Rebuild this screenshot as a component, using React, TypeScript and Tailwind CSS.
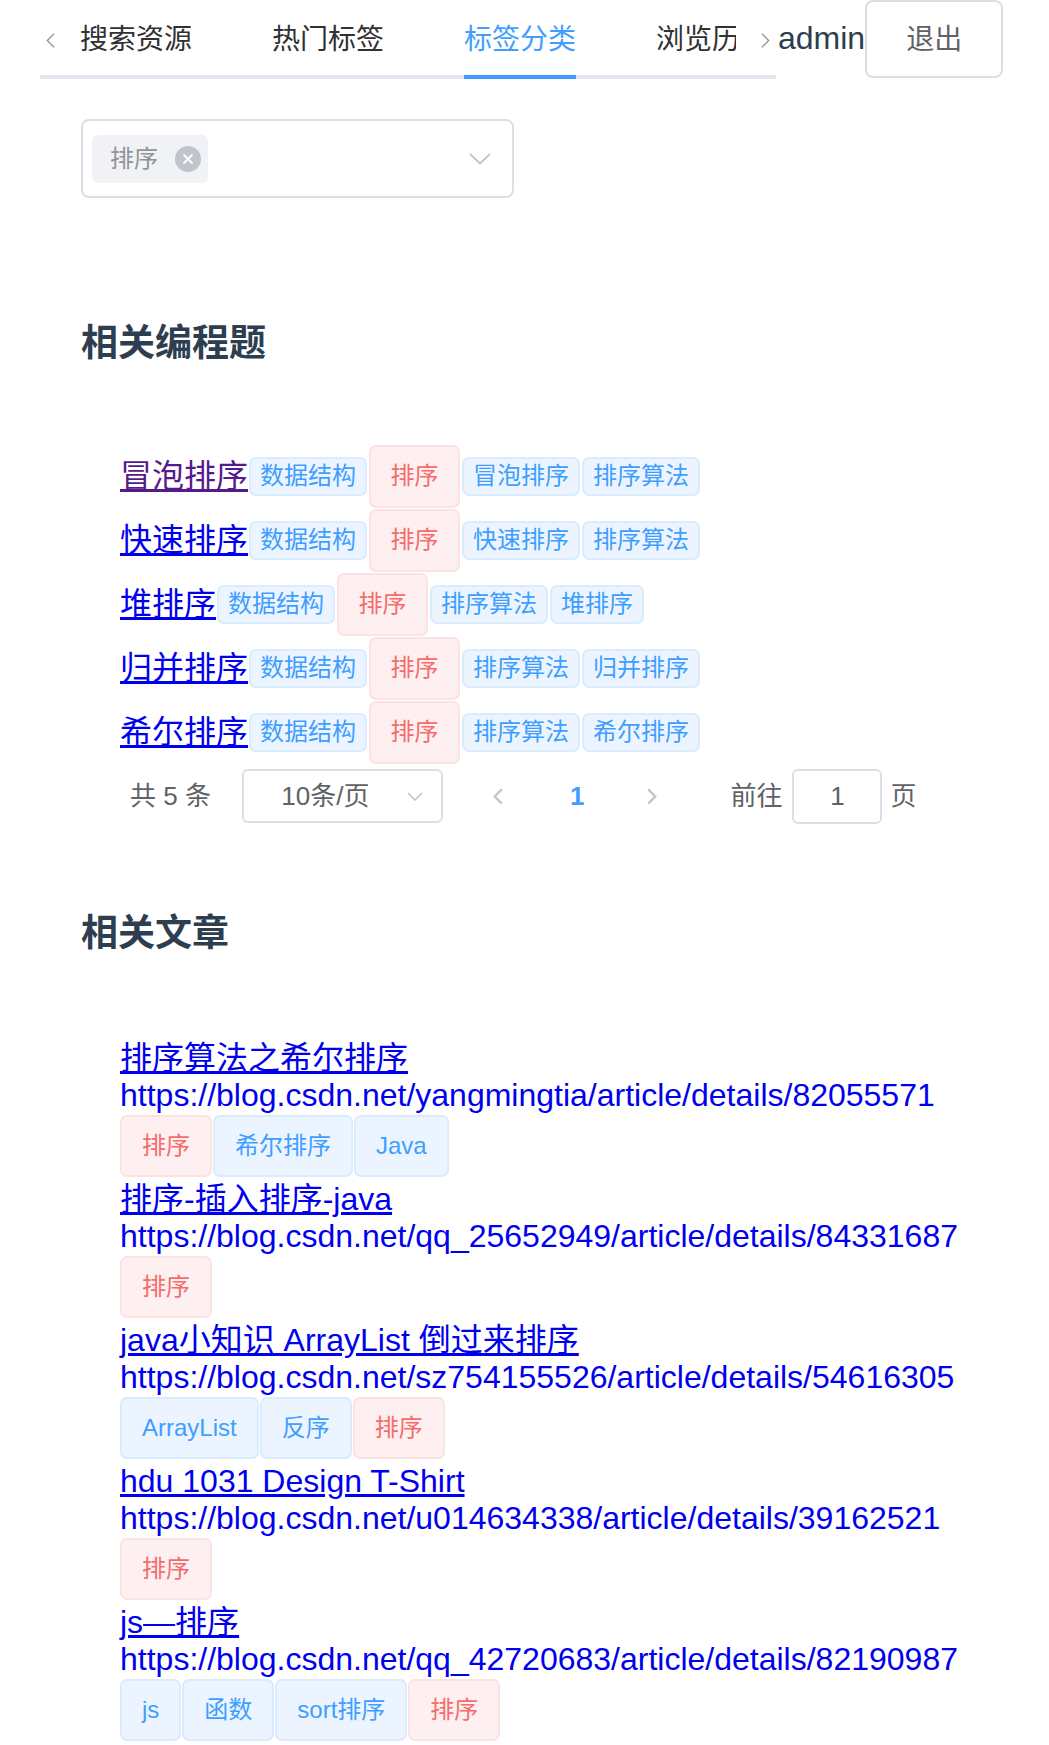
import React from 'react';

const problems = [
  { name: '冒泡排序', visited: true, tags: ['数据结构', '排序', '冒泡排序', '排序算法'] },
  { name: '快速排序', visited: false, tags: ['数据结构', '排序', '快速排序', '排序算法'] },
  { name: '堆排序', visited: false, tags: ['数据结构', '排序', '排序算法', '堆排序'] },
  { name: '归并排序', visited: false, tags: ['数据结构', '排序', '排序算法', '归并排序'] },
  { name: '希尔排序', visited: false, tags: ['数据结构', '排序', '排序算法', '希尔排序'] },
];

const articles = [
  { title: '排序算法之希尔排序', url: 'https://blog.csdn.net/yangmingtia/article/details/82055571', tags: ['排序', '希尔排序', 'Java'] },
  { title: '排序-插入排序-java', url: 'https://blog.csdn.net/qq_25652949/article/details/84331687', tags: ['排序'] },
  { title: 'java小知识 ArrayList 倒过来排序', url: 'https://blog.csdn.net/sz754155526/article/details/54616305', tags: ['ArrayList', '反序', '排序'] },
  { title: 'hdu 1031 Design T-Shirt', url: 'https://blog.csdn.net/u014634338/article/details/39162521', tags: ['排序'] },
  { title: 'js—排序', url: 'https://blog.csdn.net/qq_42720683/article/details/82190987', tags: ['js', '函数', 'sort排序', '排序'] },
];

const tabs = ['搜索资源', '热门标签', '标签分类', '浏览历史'];

function Chevron({ dir, className }: { dir: 'left' | 'right'; className: string }) {
  return (
    <svg viewBox="0 0 12 18" className={className} fill="none" stroke="currentColor">
      {dir === 'left' ? <path d="M10 1.5 L2.5 9 L10 16.5" /> : <path d="M2 1.5 L9.5 9 L2 16.5" />}
    </svg>
  );
}

// big tag = element default size, small = mini
function Tag({ text, big, gap }: { text: string; big?: boolean; gap: string }) {
  const red = text === '排序';
  const size = big ? 'h-[62px] px-[20px]' : red ? 'h-[63px] px-[19.5px]' : 'h-[39px] px-[9px]';
  const color = red
    ? 'bg-[#fef0f0] border-[#fde2e2] text-[#f56c6c]'
    : 'bg-[#ecf5ff] border-[#d9ecff] text-[#409eff]';
  return (
    <span className={`${gap} ${size} ${color} flex items-center border-2 rounded-[7px] text-[24px] leading-none whitespace-nowrap`}>
      {text}
    </span>
  );
}

export default function App() {
  return (
    <div className="w-[1049px] min-h-[1745px] bg-white font-['Liberation_Sans','Noto_Sans_CJK_SC',sans-serif] text-[#2c3e50]">
      {/* header */}
      <div className="flex items-start h-[79px]">
        <div className="relative ml-[40px] w-[736px] h-[79px] flex">
          <div className="absolute left-0 right-0 bottom-0 h-[4px] bg-[#e4e7ed]" />
          <div className="w-[40px] h-[75px] flex items-center pl-[5px] pt-[6px] text-[#909399]">
            <Chevron dir="left" className="w-[11px] h-[17px] stroke-[1.5]" />
          </div>
          <div className="relative w-[656px] h-[79px] overflow-hidden flex">
            {tabs.map((t, i) => (
              <div
                key={t}
                className={`relative h-[79px] shrink-0 flex items-start pt-[21px] text-[28px] leading-[37px] whitespace-nowrap ${i === 0 ? 'pr-[40px]' : i === 3 ? 'pl-[40px]' : 'px-[40px]'} ${i === 2 ? 'text-[#409eff]' : 'text-[#303133]'}`}
              >
                {t}
                {i === 2 && <div className="absolute left-[40px] right-[40px] bottom-0 h-[4px] bg-[#409eff]" />}
              </div>
            ))}
          </div>
          <div className="w-[40px] h-[75px] flex items-center justify-end pr-[5px] pt-[6px] text-[#909399]">
            <Chevron dir="right" className="w-[11px] h-[17px] stroke-[1.5]" />
          </div>
        </div>
        <div className="ml-[2px] mt-[20px] text-[32px] leading-[37px] text-[#2c3e50]">admin</div>
        <button className="w-[138px] h-[78px] border-2 border-[#dcdfe6] rounded-[8px] bg-white flex items-center justify-center pt-[2px] text-[28px] text-[#606266]">
          退出
        </button>
      </div>

      {/* select */}
      <div className="ml-[81px] mt-[40px] w-[433px] h-[79px] border-2 border-[#dcdfe6] rounded-[8px] flex items-center pr-[21px]">
        <div className="ml-[9px] h-[48px] bg-[#f0f2f5] rounded-[6px] flex items-center pl-[18px] pr-[7px]">
          <span className="text-[24px] leading-none text-[#909399]">排序</span>
          <span className="ml-[17px] w-[26px] h-[26px] rounded-full bg-[#c0c4cc] flex items-center justify-center">
            <svg viewBox="0 0 12 12" className="w-[12px] h-[12px]" stroke="white" strokeWidth="1.8">
              <path d="M1.5 1.5 L10.5 10.5 M10.5 1.5 L1.5 10.5" />
            </svg>
          </span>
        </div>
        <div className="flex-1" />
        <svg viewBox="0 0 22 12" className="w-[22px] h-[12px]" fill="none" stroke="#c0c4cc" strokeWidth="1.8">
          <path d="M1 1 L11 10.5 L21 1" />
        </svg>
      </div>

      <h3 className="ml-[81px] mt-[124px] text-[37px] leading-[44px] font-bold text-[#2c3e50]">相关编程题</h3>

      {/* problems */}
      <div className="pl-[120px] mt-[78px]">
        {problems.map((p) => (
          <div key={p.name} className="flex items-center h-[64px]">
            <a
              href="#"
              className={`text-[32px] leading-[37px] underline ${p.visited ? 'text-[#551a8b]' : 'text-[#0000ee]'}`}
            >
              {p.name}
            </a>
            {p.tags.map((t, i) => (
              <Tag key={i} text={t} gap={i === 0 ? 'ml-[1px]' : 'ml-[2px]'} />
            ))}
          </div>
        ))}

        {/* pagination */}
        <div className="mt-[4px] h-[56px] flex items-center text-[26px] text-[#606266]">
          <span className="ml-[10px] leading-none whitespace-pre">共 5 条</span>
          <div className="ml-[31px] w-[201px] h-[54px] border-2 border-[#dcdfe6] rounded-[6px] flex items-center pl-[16px]">
            <span className="flex-1 text-center leading-none">10条/页</span>
            <span className="w-[50px] flex justify-center pr-[2px]">
              <svg viewBox="0 0 16 9" className="w-[16px] h-[9px]" fill="none" stroke="#c0c4cc" strokeWidth="1.6">
                <path d="M1 1 L8 8 L15 1" />
              </svg>
            </span>
          </div>
          <Chevron dir="left" className="ml-[49px] w-[12px] h-[17px] stroke-[2.4] text-[#c0c4cc]" />
          <span className="ml-[66px] font-bold text-[#409eff] leading-none">1</span>
          <Chevron dir="right" className="ml-[62px] w-[12px] h-[17px] stroke-[2.4] text-[#c0c4cc]" />
          <span className="ml-[72px] leading-none">前往</span>
          <div className="ml-[10px] w-[90px] h-[55px] border-2 border-[#dcdfe6] rounded-[6px] flex items-center justify-center leading-none">
            1
          </div>
          <span className="ml-[8px] leading-none">页</span>
        </div>
      </div>

      <h3 className="ml-[81px] mt-[88px] text-[37px] leading-[44px] font-bold text-[#2c3e50]">相关文章</h3>

      {/* articles */}
      <div className="pl-[120px] mt-[84px]">
        {articles.map((a) => (
          <div key={a.url}>
            <div className="h-[37px] leading-[37px] text-[32px]">
              <a href="#" className="underline text-[#0000ee] whitespace-nowrap">{a.title}</a>
            </div>
            <div className="h-[37px] leading-[37px] text-[32px] text-[#0000ee] whitespace-nowrap">{a.url}</div>
            <div className="flex pt-[1px] pb-[4px]">
              {a.tags.map((t, i) => (
                <Tag key={i} text={t} big gap={i === 0 ? '' : 'ml-[1px]'} />
              ))}
            </div>
          </div>
        ))}
      </div>
    </div>
  );
}
